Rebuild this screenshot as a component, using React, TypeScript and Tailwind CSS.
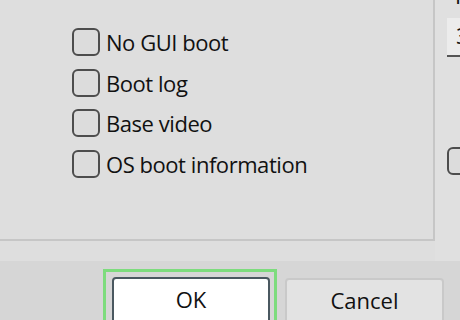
const options = ['No GUI boot', 'Boot log', 'Base video', 'OS boot information'];

function Check() {
  return <span className="block w-[28px] h-[28px] shrink-0 rounded-[6px] border-2 border-[#4d4d4d] bg-[#dcdcdc]" />;
}

export default function App() {
  return (
    <div
      className="w-[460px] h-[320px] overflow-hidden flex flex-col text-[#111]"
      style={{ fontFamily: '"Open Sans", "Noto Sans", sans-serif' }}
    >
      <div className="h-[261px] shrink-0 bg-[#dedede] flex">
        <div className="w-[435px] shrink-0">
          <div className="h-[241px] border-r-2 border-b-2 border-[#c6c6c6] pt-[28px] pl-[72px] flex flex-col gap-[12.5px]">
            {options.map((o) => (
              <label key={o} className="flex items-center gap-[6px] h-[28px]">
                <Check />
                <span className="text-[22px] leading-none tracking-[-0.45px]">{o}</span>
              </label>
            ))}
          </div>
        </div>
        <div className="flex-1 bg-[#e0e0e0] pl-[12px] flex flex-col">
          <div className="-mt-[16px] h-[22px] text-[22px] leading-none pl-[5px]">T</div>
          <div className="mt-[12px] h-[39px] bg-[#ececec] border-b-2 border-[#555] pl-[9px] pt-[6px] text-[22px] leading-none">
            3
          </div>
          <div className="mt-[90px]">
            <Check />
          </div>
        </div>
      </div>
      <div className="flex-1 bg-[#d6d6d6] flex items-start pt-[8px] pl-[103px] gap-[8px]">
        <div className="w-[174px] h-[70px] shrink-0 border-[3px] border-[#7ddc7d] pt-[5px] pl-[6px]">
          <button className="w-[158px] h-[60px] bg-white border-2 border-[#4a5860] rounded-[4px] text-[22px] leading-none pt-[9px] flex justify-center items-start">
            OK
          </button>
        </div>
        <button className="mt-[9px] w-[159px] h-[60px] shrink-0 bg-[#e3e3e3] border-2 border-[#c9c9c9] rounded-[4px] text-[22px] leading-none pt-[9px] flex justify-center items-start">
          Cancel
        </button>
      </div>
    </div>
  );
}
